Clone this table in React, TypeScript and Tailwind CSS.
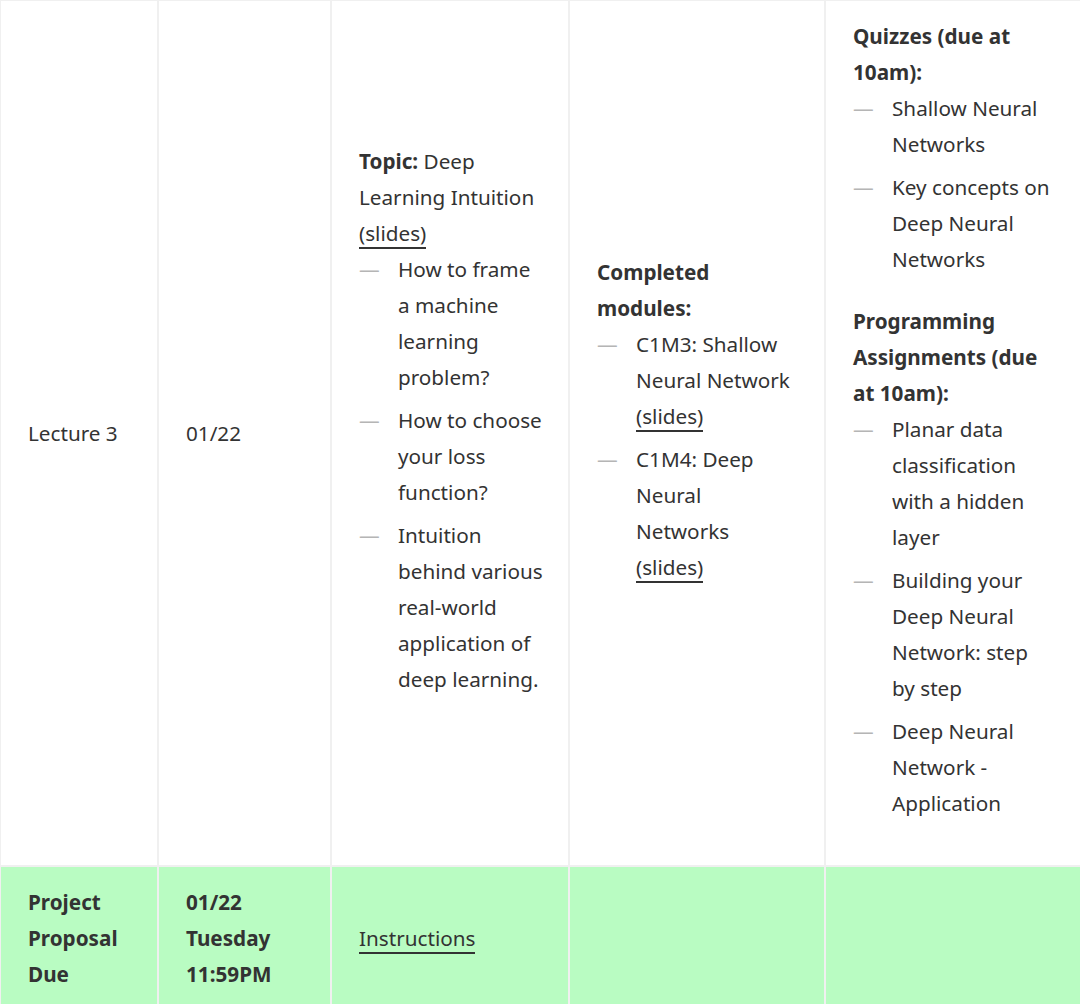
import React from 'react';

function DashList({ items }: { items: React.ReactNode[] }) {
  return (
    <ul className="mb-[26px] flex flex-col gap-[7px]">
      {items.map((it, i) => (
        <li key={i} className="flex">
          <span className="w-[39px] shrink-0 text-[#b5b5b5]">—</span>
          <span className="min-w-0">{it}</span>
        </li>
      ))}
    </ul>
  );
}

function Slides() {
  return <span className="border-b-2 border-[#333]">(slides)</span>;
}

export default function App() {
  const cell = 'border-2 border-[#f0f0f0] align-middle pl-[27px] pt-[17px] pb-[18px]';
  return (
    <div className="bg-white font-['Noto_Sans',sans-serif] text-[20.7px] leading-[36px] text-[#333]">
      <table className="w-[1081px] -ml-[1px] -mt-[1px] table-fixed border-collapse">
        <colgroup>
          <col className="w-[158px]" />
          <col className="w-[173px]" />
          <col className="w-[238px]" />
          <col className="w-[256px]" />
          <col className="w-[256px]" />
        </colgroup>
        <tbody>
          <tr>
            <td className={`${cell} pr-[20px]`}>Lecture 3</td>
            <td className={`${cell} pr-[20px]`}>01/22</td>
            <td className={`${cell} pr-[24px]`}>
              <div>
                <b className="font-bold">Topic:</b> Deep Learning Intuition <Slides />
              </div>
              <DashList
                items={[
                  'How to frame a machine learning problem?',
                  'How to choose your loss function?',
                  'Intuition behind various real-world application of deep learning.',
                ]}
              />
            </td>
            <td className={`${cell} pr-[29px]`}>
              <div className="font-bold">Completed modules:</div>
              <DashList
                items={[
                  <>C1M3: Shallow Neural Network <Slides /></>,
                  <>C1M4: Deep Neural Networks <Slides /></>,
                ]}
              />
            </td>
            <td className={`${cell} pr-[24px]`}>
              <div className="font-bold">Quizzes (due at 10am):</div>
              <DashList items={['Shallow Neural Networks', 'Key concepts on Deep Neural Networks']} />
              <div className="font-bold">Programming Assignments (due at 10am):</div>
              <DashList
                items={[
                  'Planar data classification with a hidden layer',
                  'Building your Deep Neural Network: step by step',
                  'Deep Neural Network - Application',
                ]}
              />
            </td>
          </tr>
          <tr className="bg-[#b9fcc2]">
            <td className={`${cell} pr-[20px] font-bold`}>Project Proposal Due</td>
            <td className={`${cell} pr-[20px] font-bold`}>01/22 Tuesday 11:59PM</td>
            <td className={`${cell} pr-[24px]`}>
              <span className="border-b-2 border-[#333]">Instructions</span>
            </td>
            <td className={cell}></td>
            <td className={cell}></td>
          </tr>
        </tbody>
      </table>
    </div>
  );
}
